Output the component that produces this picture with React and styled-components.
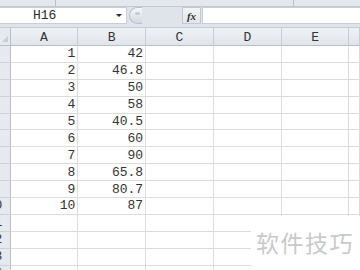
import React from "react";
import styled, { createGlobalStyle } from "styled-components";

const Global = createGlobalStyle`
  html, body { margin: 0; padding: 0; background: #ffffff; }
  body { width: 360px; height: 270px; overflow: hidden; }
`;

const Page = styled.div`
  position: relative;
  width: 360px;
  height: 270px;
  overflow: hidden;
  background: #ffffff;
  font-family: "Liberation Mono", "Courier New", monospace;
  color: #2b2b2b;
`;

const TopStrip = styled.div`
  display: flex;
  height: 6px;
  background: #e4e8ed;
  border-bottom: 1px solid #c3c9d1;
`;

const StripSeg = styled.div`
  width: ${(p) => p.$w}px;
  flex: ${(p) => (p.$w ? "none" : "1")};
  border-right: ${(p) => (p.$line ? "1px solid #b9c0c9" : "none")};
`;

const FormulaBar = styled.div`
  display: flex;
  align-items: stretch;
  height: 17px;
  padding: 0 0 3px;
  background: #dfe4ea;
  border-bottom: 1px solid #c6ccd4;
`;

const NameBox = styled.div`
  width: 127px;
  display: flex;
  align-items: center;
  background: #ffffff;
  border: 1px solid #c9ced6;
  border-left: none;
  box-sizing: border-box;
  font-size: 13px;
`;

const NameText = styled.span`
  flex: 1;
  padding-left: 33px;
`;

const Arrow = styled.span`
  width: 0;
  height: 0;
  margin-right: 4px;
  border-left: 3px solid transparent;
  border-right: 3px solid transparent;
  border-top: 3px solid #2a2a2a;
`;

const Grip = styled.div`
  width: 13px;
  margin-left: 2px;
  border-radius: 9px 0 0 9px;
  background: linear-gradient(#f6f8fa, #d2d8df);
  border: 1px solid #b8c0ca;
  border-right: none;
  box-sizing: border-box;
  display: flex;
  align-items: center;
  justify-content: center;
`;

const GripDot = styled.span`
  width: 5px;
  height: 3px;
  border-radius: 2px;
  background: #c5ccd4;
  margin-top: -5px;
  margin-left: 3px;
`;

const Spacer = styled.div`
  flex: none;
  width: 40px;
`;

const FxBox = styled.div`
  width: 19px;
  display: flex;
  align-items: center;
  justify-content: center;
  background: linear-gradient(#f2f4f7, #e2e6eb);
  border: 1px solid #c3c9d1;
  box-sizing: border-box;
  font-family: "Liberation Serif", serif;
  font-style: italic;
  font-weight: bold;
  font-size: 11px;
  color: #333;
`;

const FormulaInput = styled.div`
  flex: 1;
  margin-left: 1px;
  background: #ffffff;
  border: 1px solid #c9ced6;
  border-right: none;
  box-sizing: border-box;
`;

const Sheet = styled.div`
  display: grid;
  grid-template-columns: 10.5px repeat(5, 67.8px) 1fr;
  grid-template-rows: 18px;
  grid-auto-rows: 16.9px;
`;

const Corner = styled.div`
  background: #e6e9ee;
  border-right: 1px solid #b7bec8;
  border-bottom: 1px solid #b7bec8;
  box-sizing: border-box;
  display: flex;
  align-items: flex-end;
  justify-content: flex-end;
  padding: 0 2px 3px 0;
`;

const ColHead = styled.div`
  background: linear-gradient(#eff2f5, #e1e5eb);
  border-right: 1px solid #c8cdd5;
  border-bottom: 1px solid #b7bec8;
  box-sizing: border-box;
  display: flex;
  align-items: center;
  justify-content: center;
  font-size: 13px;
  color: #333;
  padding-top: 1px;
`;

const RowHead = styled.div`
  background: #e6e9ee;
  border-right: 1px solid #b7bec8;
  border-bottom: 1px solid #cdd2d9;
  box-sizing: border-box;
  display: flex;
  align-items: center;
  justify-content: flex-end;
  overflow: hidden;
  font-size: 13px;
  color: #333;
`;

const RowLabel = styled.span`
  flex: none;
  width: 30px;
  text-align: center;
`;

const Cell = styled.div`
  border-right: 1px solid #dadcdf;
  border-bottom: 1px solid #dadcdf;
  box-sizing: border-box;
  display: flex;
  align-items: center;
  justify-content: flex-end;
  padding-right: 2px;
  font-size: 13px;
  color: #333;
  white-space: nowrap;
`;

const Watermark = styled.div`
  position: absolute;
  left: 251px;
  top: 216px;
  right: 0;
  bottom: 0;
  background: #ffffff;
  display: flex;
  align-items: flex-start;
  padding: 9px 0 0 5px;
  font-family: "Noto Sans CJK SC", "Noto Sans", sans-serif;
  font-size: 23px;
  letter-spacing: 1.5px;
  color: #c9c9c9;
  white-space: nowrap;
`;

const cols = ["A", "B", "C", "D", "E", ""];
const dataB = ["42", "46.8", "50", "58", "40.5", "60", "90", "65.8", "80.7", "87"];

export default function App() {
  const rows = Array.from({ length: 14 }, (_, i) => i + 1);
  return (
    <Page>
      <Global />
      <TopStrip>
        <StripSeg $w={55} $line />
        <StripSeg $w={237} $line />
        <StripSeg />
      </TopStrip>
      <FormulaBar>
        <NameBox>
          <NameText>H16</NameText>
          <Arrow />
        </NameBox>
        <Grip>
          <GripDot />
        </Grip>
        <Spacer />
        <FxBox>fx</FxBox>
        <FormulaInput />
      </FormulaBar>
      <Sheet>
        <Corner>
          <svg width="6" height="6" viewBox="0 0 6 6">
            <path d="M6 0 L6 6 L0 6 Z" fill="#c9ced5" />
          </svg>
        </Corner>
        {cols.map((c, i) => (
          <ColHead key={i}>{c}</ColHead>
        ))}
        {rows.map((r) => (
          <React.Fragment key={r}>
            <RowHead>
              <RowLabel>{r}</RowLabel>
            </RowHead>
            <Cell>{r <= 10 ? r : ""}</Cell>
            <Cell>{r <= 10 ? dataB[r - 1] : ""}</Cell>
            <Cell />
            <Cell />
            <Cell />
            <Cell />
          </React.Fragment>
        ))}
      </Sheet>
      <Watermark>软件技巧</Watermark>
    </Page>
  );
}
